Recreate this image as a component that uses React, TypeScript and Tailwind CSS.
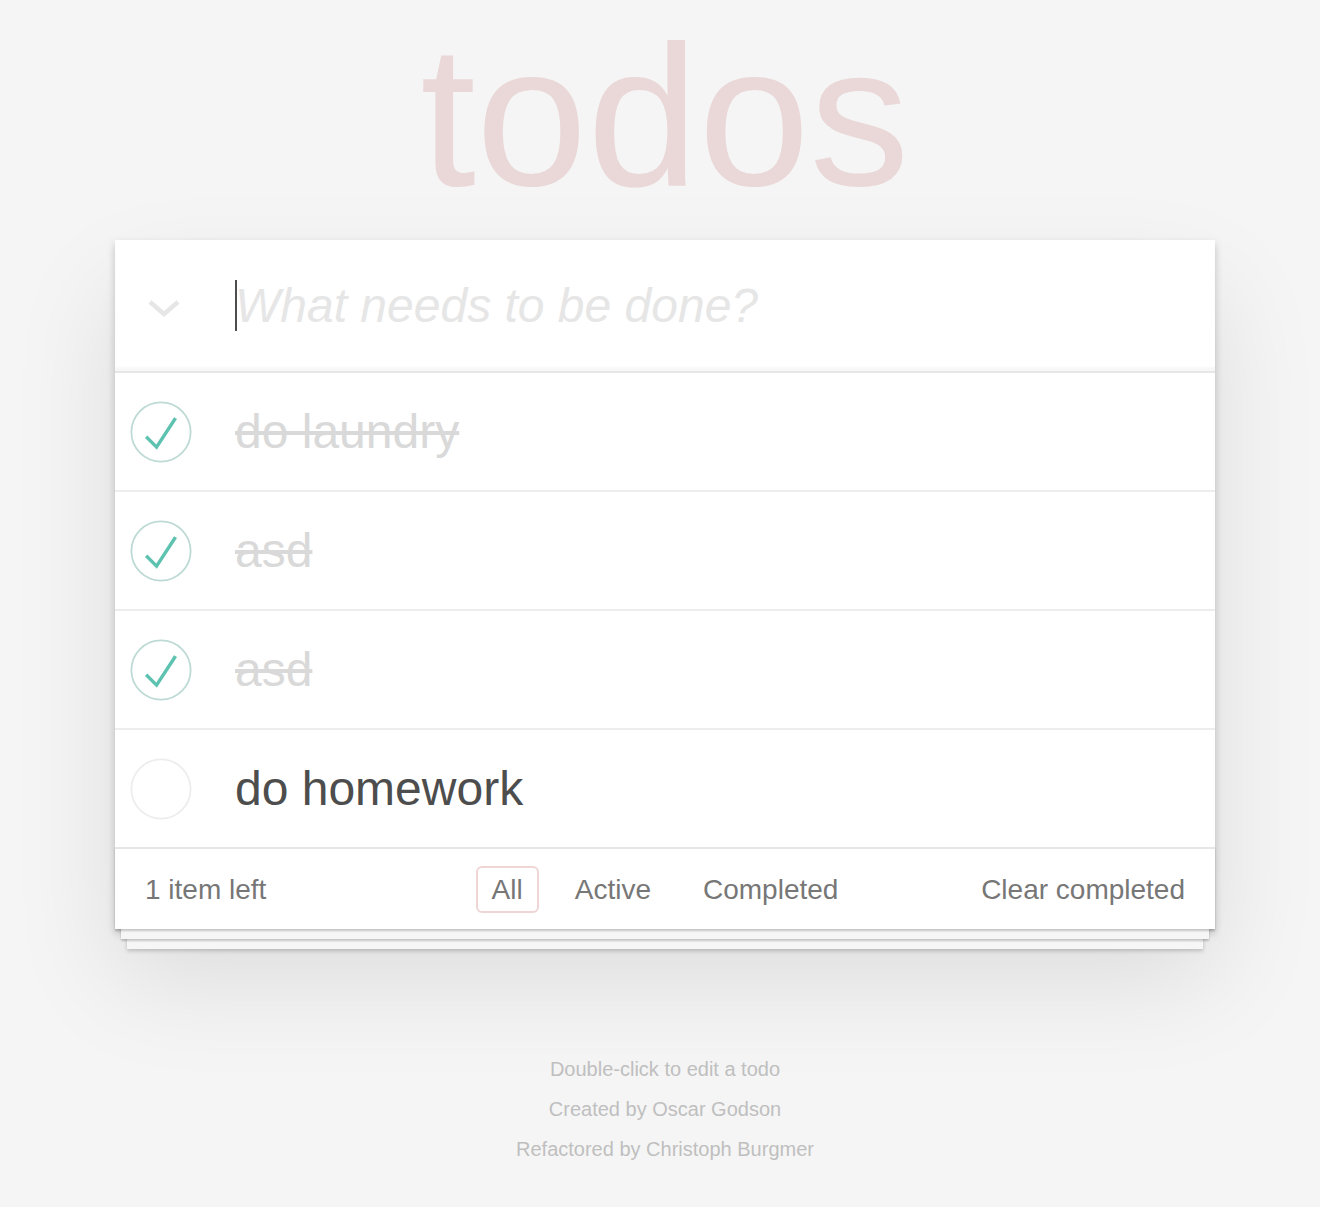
const todos = [
  { title: "do laundry", done: true },
  { title: "asd", done: true },
  { title: "asd", done: true },
  { title: "do homework", done: false },
]

const filters = ["All", "Active", "Completed"]

function Toggle({ done }: { done: boolean }) {
  return (
    <svg width="62" height="62" viewBox="-2.3 -2.3 104.6 104.6">
      <circle cx="50" cy="50" r="50" fill="none" stroke={done ? "#bddad5" : "#ededed"} strokeWidth="3" />
      {done && <path fill="#5dc2af" d="M72 25L42 71 27 56l-4 4 20 20 34-52z" />}
    </svg>
  )
}

export default function App() {
  return (
    <div className="min-h-[1207px] bg-[#f5f5f5] font-['Liberation_Sans',Arial,sans-serif] text-[#4d4d4d]">
      <div className="ml-[115px] w-[1100px] pt-[16px]">
        <h1 className="text-center text-[200px] font-thin leading-none text-[rgba(175,47,47,0.15)]">todos</h1>

        {/* app card */}
        <section className="mt-[24px] bg-white shadow-[0_4px_8px_0_rgba(0,0,0,0.2),0_50px_100px_0_rgba(0,0,0,0.1)]">
          <header className="flex h-[131px] items-center bg-white shadow-[inset_0_-4px_2px_rgba(0,0,0,0.03)]">
            <div className="flex w-[120px] items-center">
              <svg width="34" height="20" viewBox="0 0 34 20" className="ml-[32px] mt-[6px]">
                <polyline points="3,3 17,15 31,3" fill="none" stroke="#e6e6e6" strokeWidth="4.5" />
              </svg>
            </div>
            <div className="relative text-[48px] italic leading-[67px] text-[#e6e6e6]">
              <span className="absolute left-0 top-[8px] h-[51px] w-[2px] bg-[#4d4d4d]" />
              What needs to be done?
            </div>
          </header>

          <ul className="border-t-2 border-[#e6e6e6]">
            {todos.map((todo, i) => (
              <li key={i} className="flex h-[119px] items-center border-b-2 border-[#ededed] last:h-[117px] last:border-b-0">
                <div className="flex w-[120px] pl-[15px]">
                  <Toggle done={todo.done} />
                </div>
                <span
                  className={
                    todo.done
                      ? "text-[48px] leading-[58px] text-[#d9d9d9] line-through"
                      : "text-[48px] leading-[58px] text-[#4d4d4d]"
                  }
                >
                  {todo.title}
                </span>
              </li>
            ))}
          </ul>

          <footer className="grid h-[82px] grid-cols-[1fr_auto_1fr] items-center border-t-2 border-[#e6e6e6] px-[30px] text-[28px] leading-[39px] text-[#777] shadow-[0_2px_2px_rgba(0,0,0,0.2),0_16px_0_-6px_#f6f6f6,0_18px_2px_-6px_rgba(0,0,0,0.2),0_32px_0_-12px_#f6f6f6,0_34px_4px_-12px_rgba(0,0,0,0.2)]">
            <span>1 item left</span>
            <div className="flex gap-[20px]">
              {filters.map((f) => (
                <span
                  key={f}
                  className={
                    f === "All"
                      ? "rounded-[6px] border-2 border-[rgba(175,47,47,0.2)] px-[14px] py-[6px] leading-[31px]"
                      : "rounded-[6px] border-2 border-transparent px-[14px] py-[6px] leading-[31px]"
                  }
                >
                  {f}
                </span>
              ))}
            </div>
            <span className="justify-self-end">Clear completed</span>
          </footer>
        </section>

        <div className="mt-[120px] text-center text-[20px] leading-[40px] text-[#bfbfbf]">
          <p>Double-click to edit a todo</p>
          <p>Created by Oscar Godson</p>
          <p>Refactored by Christoph Burgmer</p>
        </div>
      </div>
    </div>
  )
}
